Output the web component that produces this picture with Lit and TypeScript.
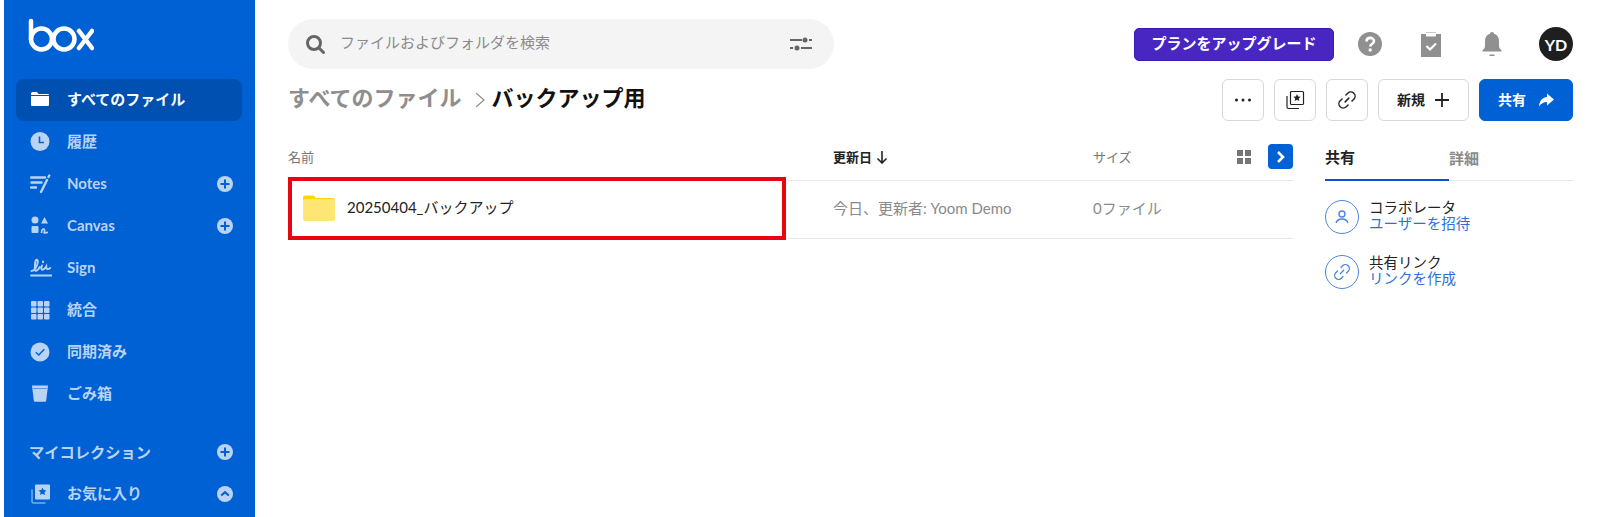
import { LitElement, html, css, svg } from 'lit';
import { customElement } from 'lit/decorators.js';

const plus = svg`<circle cx="8" cy="8" r="8" fill="currentColor"/><path d="M8 3.5v9M3.5 8h9" stroke="#0061d5" stroke-width="2"/>`;
const chevUp = svg`<circle cx="8" cy="8" r="8" fill="currentColor"/><path d="M4.2 9.6 8 6.2l3.8 3.4" stroke="#0061d5" stroke-width="2" fill="none"/>`;

const icons = {
  folder: svg`<path d="M1 3.5A1.5 1.5 0 0 1 2.5 2H7l1.5 2H18a1 1 0 0 1 1 1v10a1 1 0 0 1-1 1H2a1 1 0 0 1-1-1z" fill="currentColor"/><path d="M1 5.5h18" stroke="#0050b2" stroke-width="1"/>`,
  clock: svg`<circle cx="10" cy="9.5" r="9.5" fill="currentColor"/><path d="M9.5 4.5v6H14" stroke="#0061d5" stroke-width="1.6" fill="none"/>`,
  notes: svg`<path d="M1 3.5h14M1.500 8.500h10M1 13.500h5M17 6 11 18M19.300 1.500l-.8 1.500" stroke="currentColor" stroke-width="2.400" stroke-linecap="round" fill="none"/>`,
  canvas: svg`<circle cx="5" cy="4" r="3.5" fill="currentColor"/><path d="M11 7.500 14.500 1 18 7.500z" fill="currentColor"/><rect x="1.500" y="10" width="7" height="7" rx="1" fill="currentColor"/><path d="M11.500 17c0-4 2.500-5 3-3s-1 3 0 3 2-1 3.500-.5" stroke="currentColor" stroke-width="1.700" fill="none"/>`,
  sign: svg`<path d="M1.500 13c3 0 6-5 6.300-9C8 1 5.800 1 5.300 4c-.5 3-.5 5.500-.5 7.500 0 2.300 3 1.500 5-2.500M12 7.500c-.8 2.200-1 4.300.4 4.300 1.600 0 2.800-1.800 3.800-3.300 0 2.300 1.300 3.800 4 1.500M13 3.500v.8M1 17.500h21" stroke="currentColor" stroke-width="1.900" fill="none" stroke-linecap="round"/>`,
  grid: svg`${[0, 1, 2].flatMap((r) => [0, 1, 2].map((c) => svg`<rect x=${1 + c * 6.5} y=${1 + r * 6.5} width="5.5" height="5.5" rx="1" fill="currentColor"/>`))}`,
  synced: svg`<circle cx="10" cy="10" r="9.5" fill="currentColor"/><path d="M5.800 10.200l3 2.800 5.500-5.800" stroke="#0061d5" stroke-width="1.500" fill="none"/>`,
  trash: svg`<path d="M2 1.500h16l-1.800 15a1.500 1.500 0 0 1-1.500 1.300H5.300a1.500 1.500 0 0 1-1.500-1.300z" fill="currentColor"/><path d="M3 4.500h14" stroke="#0061d5" stroke-width="1" opacity=".5"/>`,
  fav: svg`<rect x="5" y="0.500" width="15" height="15" rx="1" fill="currentColor"/><path d="M12.500 3.500l1.200 2.600 2.800.3-2.100 1.900.6 2.800-2.500-1.400-2.500 1.400.6-2.800-2.100-1.900 2.800-.3z" fill="#0061d5"/><path d="M2 5.500v12.500a1 1 0 0 0 1 1h12.500" stroke="currentColor" stroke-width="1" fill="none"/>`,
};

const navItems = [
  { label: 'すべてのファイル', icon: icons.folder, active: true },
  { label: '履歴', icon: icons.clock },
  { label: 'Notes', icon: icons.notes, side: plus },
  { label: 'Canvas', icon: icons.canvas, side: plus },
  { label: 'Sign', icon: icons.sign },
  { label: '統合', icon: icons.grid },
  { label: '同期済み', icon: icons.synced },
  { label: 'ごみ箱', icon: icons.trash },
];

const linkIcon = svg`<path d="M8.300 11.700l3.400-3.400M9 5.500l1.700-1.700a3.300 3.300 0 0 1 5.500 5.500L14.500 11M11 14.500l-1.700 1.700a3.300 3.300 0 0 1-5.500-5.500L5.500 9" stroke="currentColor" stroke-width="1.300" fill="none" stroke-linecap="round"/>`;

@customElement('app-root')
export class AppRoot extends LitElement {
  static styles = css`
    :host {
      display: block;
      height: 517px;
      overflow: hidden;
      background: #fff;
      font-family: Lato, 'Noto Sans CJK JP', sans-serif;
      color: #222;
    }

    .page {
      display: flex;
      height: 517px;
    }

    .sidebar {
      width: 251px;
      margin-left: 4px;
      background: #0061d5;
      flex: none;
      padding: 0 13px 0 12px;
      box-sizing: border-box;
      color: #b9d3f4;
      font-size: 15px;
      font-weight: 700;
    }

    .logo {
      display: block;
      margin: 18px 0 0 12px;
      height: 36px;
      color: #fff;
    }

    .nav {
      margin-top: 25px;
      display: flex;
      flex-direction: column;
    }

    .nav-item {
      display: flex;
      align-items: center;
      height: 42px;
      padding: 0 9px 0 14px;
      border-radius: 8px;
    }

    .nav-item.active {
      height: 42px;
      background: #0050b2;
      color: #fff;
    }

    .nav-icon {
      width: 22px;
      height: 20px;
      flex: none;
      margin-right: 15px;
    }

    .nav-item .label {
      flex: 1;
      padding-bottom: 3px;
    }

    .side-icon {
      width: 16px;
      height: 16px;
      flex: none;
    }

    .section {
      display: flex;
      align-items: center;
      justify-content: space-between;
      margin-top: 16px;
      height: 42px;
      padding: 0 9px 0 13px;
      font-size: 15.25px;
    }

    .section span {
      padding-bottom: 3px;
    }

    .main {
      flex: 1;
      min-width: 0;
      padding: 19px 27px 0 33px;
    }

    .top {
      display: flex;
      align-items: flex-start;
      justify-content: space-between;
    }

    .search {
      width: 546px;
      height: 50px;
      border-radius: 25px;
      background: #f4f4f4;
      display: flex;
      align-items: center;
      padding: 0 22px 0 16px;
      box-sizing: border-box;
      color: #8b8b8b;
      font-size: 15px;
    }

    .search .glass {
      width: 22px;
      height: 22px;
      margin-right: 14px;
    }

    .search .text {
      flex: 1;
      padding-bottom: 6px;
    }

    .top-right {
      display: flex;
      align-items: center;
      margin-top: 8px;
      height: 34px;
    }

    .upgrade {
      width: 200px;
      height: 33px;
      background: #4826c2;
      border: 1px solid #3a19b8;
      border-radius: 5px;
      box-sizing: border-box;
      color: #fff;
      font-size: 15px;
      font-weight: 700;
      display: flex;
      align-items: center;
      justify-content: center;
      padding-bottom: 4px;
    }

    .top-icon {
      width: 26px;
      height: 26px;
      color: #909090;
      margin-left: 35px;
      flex: none;
    }

    .top-icon.first {
      margin-left: 23px;
    }

    .avatar {
      width: 34px;
      height: 34px;
      border-radius: 50%;
      background: #1f1f1f;
      color: #fff;
      font-size: 16px;
      font-weight: 700;
      display: flex;
      align-items: center;
      justify-content: center;
      margin-left: 34px;
      flex: none;
    }

    .title-row {
      display: flex;
      align-items: center;
      justify-content: space-between;
      margin-top: 10px;
    }

    .crumbs {
      display: flex;
      align-items: center;
      font-size: 22px;
      font-weight: 700;
      color: #8e8e8e;
      margin-top: -9px;
    }

    .crumbs .sep {
      width: 12px;
      height: 18px;
      margin: 8px 6px 0 12px;
    }

    .crumbs .current {
      color: #111;
    }

    .actions {
      display: flex;
      gap: 10px;
    }

    .btn {
      height: 42px;
      min-width: 42px;
      box-sizing: border-box;
      border: 1px solid #d8d8d8;
      border-radius: 6px;
      background: #fff;
      display: flex;
      align-items: center;
      justify-content: center;
      color: #222;
      font-size: 14px;
      font-weight: 700;
      font-family: inherit;
    }

    .btn svg {
      width: 22px;
      height: 22px;
    }

    .btn span {
      padding-bottom: 3px;
    }

    .btn.new {
      width: 91px;
      gap: 9px;
    }

    .btn.share {
      width: 94px;
      gap: 12px;
      background: #0061d5;
      border-color: #0061d5;
      color: #fff;
    }

    .body {
      display: flex;
      margin-top: 12px;
    }

    .table {
      width: 1005px;
      flex: none;
    }

    .row {
      display: grid;
      grid-template-columns: 545px 260px 1fr;
      align-items: center;
      border-bottom: 1px solid #e8e8e8;
    }

    .row.head {
      height: 47px;
      font-size: 13px;
      color: #767676;
    }

    .row.file {
      height: 57px;
      font-size: 15px;
      color: #8a8a8a;
    }

    .row.file > span {
      padding-bottom: 5px;
    }

    .sorted {
      display: flex;
      align-items: center;
      gap: 4px;
      color: #222;
      font-weight: 700;
    }

    .sorted svg {
      width: 12px;
      height: 14px;
    }

    .size-head {
      display: flex;
      align-items: center;
      justify-content: space-between;
    }

    .view {
      display: flex;
      align-items: center;
      gap: 17px;
    }

    .view .tiles {
      width: 14px;
      height: 14px;
    }

    .toggle {
      width: 25px;
      height: 25px;
      border-radius: 4px;
      background: #0061d5;
      display: flex;
      align-items: center;
      justify-content: center;
    }

    .toggle svg {
      width: 12px;
      height: 14px;
    }

    .name {
      position: relative;
      display: flex;
      align-items: center;
      gap: 12px;
      padding-left: 15px;
      padding-bottom: 3px;
      box-sizing: border-box;
      height: 100%;
      color: #222;
    }

    .name span {
      padding-bottom: 3px;
    }

    .name svg {
      width: 32px;
      height: 26px;
    }

    .mark {
      position: absolute;
      left: 0;
      top: -4px;
      width: 498px;
      height: 63px;
      box-sizing: border-box;
      border: 4px solid #e8050f;
    }

    .panel {
      width: 248px;
      margin-left: 32px;
      flex: none;
    }

    .tabs {
      display: grid;
      grid-template-columns: 124px 1fr;
      height: 47px;
      border-bottom: 1px solid #e8e8e8;
      font-size: 15px;
      font-weight: 700;
      color: #8a8a8a;
    }

    .tab {
      display: flex;
      align-items: center;
      margin-bottom: -1px;
    }

    .tab.active {
      color: #222;
      border-bottom: 2px solid #0f4fd0;
      box-sizing: border-box;
    }

    .share-item {
      display: flex;
      align-items: center;
      gap: 10px;
      margin-top: 19px;
      font-size: 14.5px;
      line-height: 16px;
    }

    .share-item + .share-item {
      margin-top: 21px;
    }

    .share-item .circle {
      width: 34px;
      height: 34px;
      flex: none;
      color: #4a86e0;
    }

    .share-item .lines {
      padding-bottom: 2px;
    }

    .share-item .link {
      color: #2c6fd8;
    }
  `;

  render() {
    return html`
      <div class="page">
        <aside class="sidebar">
          ${this.renderLogo()}
          <nav class="nav">
            ${navItems.map(
              (item) => html`
                <div class="nav-item ${item.active ? 'active' : ''}">
                  <svg class="nav-icon" viewBox="0 0 22 20">${item.icon}</svg>
                  <span class="label">${item.label}</span>
                  ${item.side ? html`<svg class="side-icon" viewBox="0 0 16 16">${item.side}</svg>` : ''}
                </div>
              `
            )}
          </nav>
          <div class="section">
            <span>マイコレクション</span>
            <svg class="side-icon" viewBox="0 0 16 16">${plus}</svg>
          </div>
          <div class="nav-item">
            <svg class="nav-icon" viewBox="0 0 22 20">${icons.fav}</svg>
            <span class="label">お気に入り</span>
            <svg class="side-icon" viewBox="0 0 16 16">${chevUp}</svg>
          </div>
        </aside>

        <main class="main">
          <div class="top">
            <div class="search">
              <svg class="glass" viewBox="0 0 22 22" fill="none" stroke="#666" stroke-width="3">
                <circle cx="10" cy="10" r="6.5" />
                <path d="M15 15l4.500 4.500" stroke-linecap="round" />
              </svg>
              <span class="text">ファイルおよびフォルダを検索</span>
              <svg width="22" height="14" viewBox="0 0 22 14" fill="#666">
                <rect x="0" y="2" width="12" height="2" />
                <circle cx="15" cy="3" r="2.5" />
                <rect x="19" y="2" width="3" height="2" />
                <rect x="0" y="10" width="3" height="2" />
                <circle cx="7" cy="11" r="2.5" />
                <rect x="11" y="10" width="11" height="2" />
              </svg>
            </div>
            <div class="top-right">
              <div class="upgrade">プランをアップグレード</div>
              <svg class="top-icon first" viewBox="0 0 26 26">
                <circle cx="13" cy="13" r="12" fill="currentColor" />
                <path d="M9.500 10.500c0-5 7.500-4.500 7.500-.5 0 3-3.500 3-3.800 5.500" stroke="#fff" stroke-width="2.600" fill="none" />
                <circle cx="13.200" cy="19" r="1.700" fill="#fff" />
              </svg>
              <svg class="top-icon" viewBox="0 0 26 26">
                <path d="M3 3h5V1h10v2h5v23H3z" fill="currentColor" />
                <path d="M8 1.500h10v3a1 1 0 0 1-1 1H9a1 1 0 0 1-1-1z" fill="#fff" />
                <path d="M8.500 15l3.500 3.500 6-6" stroke="#fff" stroke-width="2.200" fill="none" />
              </svg>
              <svg class="top-icon" viewBox="0 0 26 26">
                <path d="M13 1c1.200 0 2 .8 2 1.800 3.500 1 5 3.800 5 7.200v5c0 2 1.500 3 2.500 4.500v1h-19v-1C4.500 18 6 17 6 15v-5c0-3.400 1.500-6.200 5-7.200C11 1.800 11.800 1 13 1z" fill="currentColor" />
                <path d="M10.500 23.500h5V25h-5z" fill="currentColor" />
              </svg>
              <div class="avatar">YD</div>
            </div>
          </div>

          <div class="title-row">
            <div class="crumbs">
              <span>すべてのファイル</span>
              <svg class="sep" viewBox="0 0 12 18" fill="none" stroke="#8e8e8e" stroke-width="1.200"><path d="M2 2l8 7-8 7" /></svg>
              <span class="current">バックアップ用</span>
            </div>
            <div class="actions">
              <button class="btn">
                <svg viewBox="0 0 22 22" fill="#222"><circle cx="4.500" cy="11" r="1.500" /><circle cx="11" cy="11" r="1.500" /><circle cx="17.500" cy="11" r="1.500" /></svg>
              </button>
              <button class="btn">
                <svg viewBox="0 0 22 22">
                  <rect x="6.500" y="2.500" width="13" height="13" rx="1" fill="#fff" stroke="#222" stroke-width="1.200" />
                  <path d="M13 5l1.100 2.400 2.600.3-1.900 1.700.5 2.600-2.300-1.300-2.300 1.300.5-2.600-1.900-1.700 2.600-.3z" fill="#222" />
                  <path d="M3 7v11a1.500 1.500 0 0 0 1.500 1.500H15" fill="none" stroke="#222" stroke-width="1.200" />
                </svg>
              </button>
              <button class="btn">
                <svg viewBox="0 0 20 20">${linkIcon}</svg>
              </button>
              <button class="btn new">
                <span>新規</span>
                <svg viewBox="0 0 16 16" style="width:16px;height:16px" stroke="#222" stroke-width="1.800"><path d="M8 1v14M1 8h14" /></svg>
              </button>
              <button class="btn share">
                <span>共有</span>
                <svg viewBox="0 0 16 14" style="width:16px;height:14px"><path d="M9 .5 16 6.500 9 12.500V9C5.500 9 3 10.500 1 13.500 1.300 8.500 4 4.500 9 4z" fill="#fff" /></svg>
              </button>
            </div>
          </div>

          <div class="body">
            <div class="table">
              <div class="row head">
                <span>名前</span>
                <span class="sorted">更新日
                  <svg viewBox="0 0 12 14" fill="none" stroke="#222" stroke-width="1.600"><path d="M6 1v12M1.500 8.500 6 13l4.500-4.500" /></svg>
                </span>
                <div class="size-head">
                  <span>サイズ</span>
                  <div class="view">
                    <svg class="tiles" viewBox="0 0 14 14" fill="#767676"><rect width="6" height="6" /><rect x="8" width="6" height="6" /><rect y="8" width="6" height="6" /><rect x="8" y="8" width="6" height="6" /></svg>
                    <div class="toggle">
                      <svg viewBox="0 0 12 14" fill="none" stroke="#fff" stroke-width="2.600"><path d="M3 2l5 5-5 5" /></svg>
                    </div>
                  </div>
                </div>
              </div>
              <div class="row file">
                <div class="name">
                  <svg viewBox="0 0 32 26">
                    <path d="M0 3A2.500 2.500 0 0 1 2.500.5h7c1 0 1.800.5 2.300 1.300l.7 1.200H29a3 3 0 0 1 3 3v6H0z" fill="#ffd400" />
                    <rect x="0" y="4" width="32" height="22" rx="2.500" fill="#ffe672" />
                  </svg>
                  <span>20250404_バックアップ</span>
                  <div class="mark"></div>
                </div>
                <span>今日、更新者: Yoom Demo</span>
                <span>0ファイル</span>
              </div>
            </div>
            <div class="panel">
              <div class="tabs">
                <div class="tab active">共有</div>
                <div class="tab">詳細</div>
              </div>
              <div class="share-item">
                <svg class="circle" viewBox="0 0 34 34" fill="none" stroke="currentColor" stroke-width="1">
                  <circle cx="17" cy="17" r="16.500" />
                  <circle cx="17" cy="14" r="3" stroke-width="1.400" />
                  <path d="M11 23c1-3 3.500-4 6-4s5 1 6 4" stroke-width="1.400" />
                </svg>
                <div class="lines">
                  <div>コラボレータ</div>
                  <div class="link">ユーザーを招待</div>
                </div>
              </div>
              <div class="share-item">
                <svg class="circle" viewBox="0 0 34 34" fill="none" stroke="currentColor" stroke-width="1">
                  <circle cx="17" cy="17" r="16.500" />
                  <g transform="translate(7 7)">${linkIcon}</g>
                </svg>
                <div class="lines">
                  <div>共有リンク</div>
                  <div class="link">リンクを作成</div>
                </div>
              </div>
            </div>
          </div>
        </main>
      </div>
    `;
  }

  private renderLogo() {
    return html`
      <svg class="logo" width="66" height="36" viewBox="0 0 66 36" fill="none" stroke="currentColor" stroke-width="4.500" stroke-linecap="round">
        <circle cx="13.500" cy="21" r="10.500" />
        <path d="M3 3v18" />
        <circle cx="36" cy="21" r="10.500" />
        <path d="M51 13l13 17M64 13 51 30" />
      </svg>
    `;
  }
}
